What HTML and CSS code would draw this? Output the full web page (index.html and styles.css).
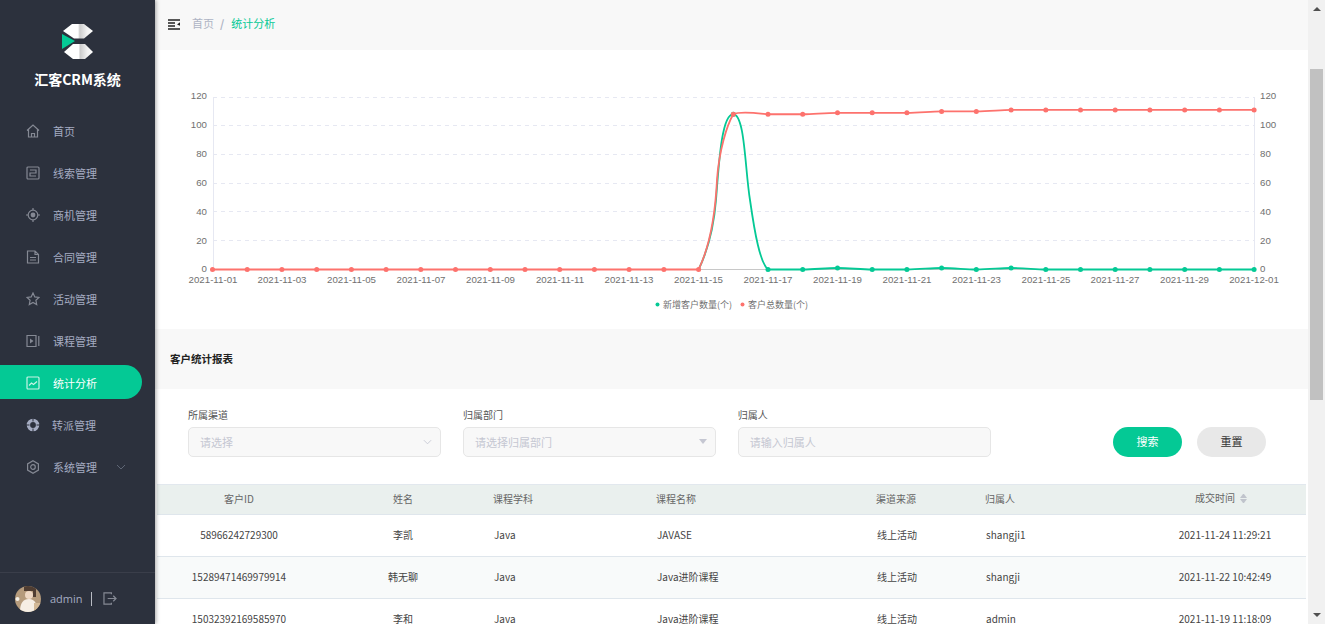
FILE: index.html
```html
<!DOCTYPE html>
<html>
<head>
    <title>统计分析</title>
    <meta charset="UTF-8">
    <link rel="stylesheet" href="styles.css">
</head>
<body>
    <div class="sidebar">
        <div class="logo">
            <svg class="logo-image" viewBox="60 22 36 40">
                <defs>
                    <linearGradient id="logo-shine" x1="0" x2="1" y1="0" y2="0">
                        <stop offset="0.5" stop-color="#ffffff"/>
                        <stop offset="0.56" stop-color="#cccccc"/>
                        <stop offset="0.8" stop-color="#f2f2f2"/>
                        <stop offset="1" stop-color="#ffffff"/>
                    </linearGradient>
                    <filter id="photo-blur"><feGaussianBlur stdDeviation="0.7"/></filter>
                    <clipPath id="avatar-clip"><circle cx="13" cy="13" r="13"/></clipPath>
                </defs>
                <polygon points="63,31 72,24 84,24 93,31 84,38.500 74,38.500" fill="url(#logo-shine)"/>
                <polygon points="64,52 73,44 85,44 93,52 85,59 73,59" fill="url(#logo-shine)"/>
                <polygon points="62,34 75,41 62,49" fill="#04c995"/>
            </svg>
            <div class="logo-name">汇客CRM系统</div>
        </div>
        <div class="menu">
            <div class="menu-element">
                <svg class="menu-icon" viewBox="0 0 14 14"><path d="M1 6.500 7 1l6 5.500M2.500 5.500V13h9V5.500M5.500 13V9.500h3V13"/></svg>
                <span>首页</span>
            </div>
            <div class="menu-element">
                <svg class="menu-icon" viewBox="0 0 14 14"><rect x="1" y="1" width="12" height="12" rx="1"/><path d="M4 4h6v3H4v3h6"/></svg>
                <span>线索管理</span>
            </div>
            <div class="menu-element">
                <svg class="menu-icon" viewBox="0 0 14 14"><circle cx="7" cy="7" r="4.800"/><circle class="icon-fill" cx="7" cy="7" r="2.400"/><path d="M7 0v2M7 12v2M0 7h2M12 7h2"/></svg>
                <span>商机管理</span>
            </div>
            <div class="menu-element">
                <svg class="menu-icon" viewBox="0 0 14 14"><path d="M1.500 1h7.500l3.500 3.500V13h-11zM9 1v3.500h3.500M4 7.500h6M4 10h6"/></svg>
                <span>合同管理</span>
            </div>
            <div class="menu-element">
                <svg class="menu-icon" viewBox="0 0 14 14"><path d="M7 1l1.800 3.900 4.200.5-3.100 2.900.8 4.200L7 10.400l-3.700 2.100.8-4.200L1 5.400l4.200-.5z"/></svg>
                <span>活动管理</span>
            </div>
            <div class="menu-element">
                <svg class="menu-icon" viewBox="0 0 14 14"><path d="M10 1.500H1v11h9zM12.800 2v10"/><path class="icon-fill" d="M4 4.500 7.500 7 4 9.500z"/></svg>
                <span>课程管理</span>
            </div>
            <div class="menu-element active-element">
                <svg class="menu-icon" viewBox="0 0 14 14"><rect x="1" y="1" width="12" height="12" rx="1"/><path d="M3 9.500 5.500 7 7.500 8.500 11 5.500"/></svg>
                <span>统计分析</span>
            </div>
            <div class="menu-element">
                <svg class="menu-icon ring-icon" viewBox="0 0 14 14"><circle cx="7" cy="7" r="4.600"/><path class="ring-cut" d="M7 0v3.500M7 10.500V14M0 7h3.500M10.500 7H14"/></svg>
                <span class="shift-left">转派管理</span>
            </div>
            <div class="menu-element">
                <svg class="menu-icon" viewBox="0 0 14 14"><path d="M7 .8l5.400 3.100v6.200L7 13.200l-5.400-3.100V3.900z"/><circle cx="7" cy="7" r="2.300"/></svg>
                <span>系统管理</span>
                <svg class="menu-arrow" viewBox="0 0 10 6"><path d="M1 1l4 4 4-4"/></svg>
            </div>
        </div>
        <div class="user-box">
            <svg class="avatar" viewBox="0 0 26 26">
                <g clip-path="url(#avatar-clip)">
                    <rect width="26" height="26" fill="#b59b7c"/>
                    <g filter="url(#photo-blur)">
                        <path d="M9 0h12v11H18V5H9z" fill="#4f3d30"/>
                        <circle cx="14" cy="9" r="4" fill="#eed8c4"/>
                        <path d="M5 26c0-9 3-13 9-13s8 5 9 13z" fill="#f6eee4"/>
                        <circle cx="2.500" cy="13" r="2" fill="#f4efe6"/>
                        <path d="M19 17h7v9h-7z" fill="#d2b896"/>
                    </g>
                </g>
            </svg>
            <span class="user-name">admin</span>
            <span class="user-split"></span>
            <svg class="logout-icon" viewBox="0 0 15 14"><path d="M9 2.500V1H1v12h8v-1.500M5 7h9M11 4l3 3-3 3"/></svg>
        </div>
    </div>

    <div class="content">
        <div class="page-head">
            <svg class="fold-icon" viewBox="0 0 12 11"><path d="M0 1h12M0 4h7M0 7h7M0 10h12"/><path class="fold-arrow" d="M12 3.300v3.400L9 5.500z"/></svg>
            <span class="crumb">首页</span>
            <span class="crumb-split">/</span>
            <span class="crumb-active">统计分析</span>
        </div>

        <div class="chart-box">
            <svg class="chart" viewBox="155 50 1153 279">
                <g class="grid">
                    <path d="M213 97.500H1254M213 125.500H1254M213 154.500H1254M213 183.500H1254M213 211.500H1254M213 240.500H1254"/>
                </g>
                <path class="axis-line" d="M213.500 97V269M1254.500 97V269"/>
                <path class="axis-base" d="M213 269.500H1254"/>

                <g class="label label-left">
                    <text x="207" y="99">120</text>
                    <text x="207" y="128">100</text>
                    <text x="207" y="157">80</text>
                    <text x="207" y="186">60</text>
                    <text x="207" y="215">40</text>
                    <text x="207" y="244">20</text>
                    <text x="207" y="272">0</text>
                </g>
                <g class="label">
                    <text x="1260" y="99">120</text>
                    <text x="1260" y="128">100</text>
                    <text x="1260" y="157">80</text>
                    <text x="1260" y="186">60</text>
                    <text x="1260" y="215">40</text>
                    <text x="1260" y="244">20</text>
                    <text x="1260" y="272">0</text>
                </g>
                <g class="label label-mid">
                    <text x="213" y="283">2021-11-01</text>
                    <text x="282" y="283">2021-11-03</text>
                    <text x="351.500" y="283">2021-11-05</text>
                    <text x="421" y="283">2021-11-07</text>
                    <text x="490.500" y="283">2021-11-09</text>
                    <text x="560" y="283">2021-11-11</text>
                    <text x="629" y="283">2021-11-13</text>
                    <text x="698.500" y="283">2021-11-15</text>
                    <text x="768" y="283">2021-11-17</text>
                    <text x="837.500" y="283">2021-11-19</text>
                    <text x="907" y="283">2021-11-21</text>
                    <text x="976.500" y="283">2021-11-23</text>
                    <text x="1046" y="283">2021-11-25</text>
                    <text x="1115" y="283">2021-11-27</text>
                    <text x="1184.500" y="283">2021-11-29</text>
                    <text x="1254" y="283">2021-12-01</text>
                </g>

                <!-- 新增客户数量 -->
                <path class="line-green" d="M698.600 269.500C708 250 714 225 716 200C719 160 722 114 733.300 114.250C745 114.500 745 170 750 200C755 235 760 262 768 269.500L802.700 269.500C815 269.500 825 268 837.500 268C850 268 860 269.500 872.200 269.500L906.900 269.500C920 269.500 930 268 941.600 268C955 268 965 269.500 976.300 269.500C990 269.500 1000 268 1011.100 268C1025 268 1035 269.500 1045.800 269.500L1254.100 269.500"/>
                <g class="dots-green">
                    <circle cx="733.300" cy="114.250" r="2.500"/>
                    <circle cx="768" cy="269.500" r="2.500"/>
                    <circle cx="802.700" cy="269.500" r="2.500"/>
                    <circle cx="837.500" cy="268" r="2.500"/>
                    <circle cx="872.200" cy="269.500" r="2.500"/>
                    <circle cx="906.900" cy="269.500" r="2.500"/>
                    <circle cx="941.600" cy="268" r="2.500"/>
                    <circle cx="976.300" cy="269.500" r="2.500"/>
                    <circle cx="1011.100" cy="268" r="2.500"/>
                    <circle cx="1045.800" cy="269.500" r="2.500"/>
                    <circle cx="1080.500" cy="269.500" r="2.500"/>
                    <circle cx="1115.200" cy="269.500" r="2.500"/>
                    <circle cx="1149.900" cy="269.500" r="2.500"/>
                    <circle cx="1184.700" cy="269.500" r="2.500"/>
                    <circle cx="1219.400" cy="269.500" r="2.500"/>
                    <circle cx="1254.100" cy="269.500" r="2.500"/>
                </g>

                <!-- 客户总数量 -->
                <path class="line-red" d="M212.500 269.500L698.600 269.500C708 250 715 220 717 180C719 150 727 125 733.300 114.250C740 111 755 113 768 114.250L802.700 114.250C815 114 825 112.800 837.500 112.800L906.900 112.800C920 112.800 930 111.400 941.600 111.400L976.300 111.400C990 111.400 1000 109.900 1011.100 109.900L1254.100 109.900"/>
                <g class="dots-red">
                    <circle cx="212.500" cy="269.500" r="2.500"/>
                    <circle cx="247.200" cy="269.500" r="2.500"/>
                    <circle cx="281.900" cy="269.500" r="2.500"/>
                    <circle cx="316.700" cy="269.500" r="2.500"/>
                    <circle cx="351.400" cy="269.500" r="2.500"/>
                    <circle cx="386.100" cy="269.500" r="2.500"/>
                    <circle cx="420.800" cy="269.500" r="2.500"/>
                    <circle cx="455.500" cy="269.500" r="2.500"/>
                    <circle cx="490.300" cy="269.500" r="2.500"/>
                    <circle cx="525" cy="269.500" r="2.500"/>
                    <circle cx="559.700" cy="269.500" r="2.500"/>
                    <circle cx="594.400" cy="269.500" r="2.500"/>
                    <circle cx="629.100" cy="269.500" r="2.500"/>
                    <circle cx="663.900" cy="269.500" r="2.500"/>
                    <circle cx="698.600" cy="269.500" r="2.500"/>
                    <circle cx="733.300" cy="114.250" r="2.500"/>
                    <circle cx="768" cy="114.250" r="2.500"/>
                    <circle cx="802.700" cy="114.250" r="2.500"/>
                    <circle cx="837.500" cy="112.800" r="2.500"/>
                    <circle cx="872.200" cy="112.800" r="2.500"/>
                    <circle cx="906.900" cy="112.800" r="2.500"/>
                    <circle cx="941.600" cy="111.400" r="2.500"/>
                    <circle cx="976.300" cy="111.400" r="2.500"/>
                    <circle cx="1011.100" cy="109.900" r="2.500"/>
                    <circle cx="1045.800" cy="109.900" r="2.500"/>
                    <circle cx="1080.500" cy="109.900" r="2.500"/>
                    <circle cx="1115.200" cy="109.900" r="2.500"/>
                    <circle cx="1149.900" cy="109.900" r="2.500"/>
                    <circle cx="1184.700" cy="109.900" r="2.500"/>
                    <circle cx="1219.400" cy="109.900" r="2.500"/>
                    <circle cx="1254.100" cy="109.900" r="2.500"/>
                </g>

                <circle class="legend-green" cx="657.500" cy="304.500" r="2"/>
                <text class="legend" x="663" y="308">新增客户数量(个)</text>
                <circle class="legend-red" cx="742.500" cy="304.500" r="2"/>
                <text class="legend" x="748" y="308">客户总数量(个)</text>
            </svg>
        </div>

        <div class="report-title">客户统计报表</div>

        <div class="filter-form">
            <div class="form-item first-item">
                <div class="form-label">所属渠道</div>
                <div class="form-input">
                    <span>请选择</span>
                    <svg class="select-arrow" viewBox="0 0 10 6"><path d="M1 1l4 4 4-4"/></svg>
                </div>
            </div>
            <div class="form-item">
                <div class="form-label">归属部门</div>
                <div class="form-input">
                    <span>请选择归属部门</span>
                    <span class="select-caret"></span>
                </div>
            </div>
            <div class="form-item">
                <div class="form-label">归属人</div>
                <div class="form-input"><span>请输入归属人</span></div>
            </div>
            <div class="form-buttons">
                <button type="button" class="search-button">搜索</button>
                <button type="button" class="reset-button">重置</button>
            </div>
        </div>

        <div class="table-box">
            <table>
                <colgroup>
                    <col class="col-id">
                    <col class="col-name">
                    <col class="col-subject">
                    <col class="col-course">
                    <col class="col-channel">
                    <col class="col-owner">
                    <col class="col-time">
                </colgroup>
                <thead>
                    <tr>
                        <th class="center">客户ID</th>
                        <th class="center">姓名</th>
                        <th>课程学科</th>
                        <th>课程名称</th>
                        <th>渠道来源</th>
                        <th>归属人</th>
                        <th class="center sort-head">成交时间<span class="sort-icon"><i class="sort-up"></i><i class="sort-down"></i></span></th>
                    </tr>
                </thead>
                <tbody>
                    <tr>
                        <td class="center">58966242729300</td>
                        <td class="center">李凯</td>
                        <td>Java</td>
                        <td>JAVASE</td>
                        <td>线上活动</td>
                        <td>shangji1</td>
                        <td class="center">2021-11-24 11:29:21</td>
                    </tr>
                    <tr class="stripe">
                        <td class="center">15289471469979914</td>
                        <td class="center">韩无聊</td>
                        <td>Java</td>
                        <td>Java进阶课程</td>
                        <td>线上活动</td>
                        <td>shangji</td>
                        <td class="center">2021-11-22 10:42:49</td>
                    </tr>
                    <tr>
                        <td class="center">15032392169585970</td>
                        <td class="center">李和</td>
                        <td>Java</td>
                        <td>Java进阶课程</td>
                        <td>线上活动</td>
                        <td>admin</td>
                        <td class="center">2021-11-19 11:18:09</td>
                    </tr>
                </tbody>
            </table>
        </div>
    </div>

    <div class="scrollbar">
        <span class="scroll-up"></span>
        <div class="scroll-thumb"></div>
        <span class="scroll-down"></span>
    </div>
</body>
</html>
```

FILE: styles.css
```css
html, body {
    height: 100%;
    margin: 0;
    overflow: hidden;
}

body {
    display: flex;
    background-color: white;
    font-family: "Noto Sans CJK SC", "Noto Sans", sans-serif;
}

/* sidebar */
.sidebar {
    width: 155px;
    flex: none;
    display: flex;
    flex-direction: column;
    background-color: #2c313d;
    box-shadow: 1px 0 4px rgba(0, 0, 0, 0.35);
    position: relative;
    z-index: 1;
}

.logo {
    height: 110px;
    display: flex;
    flex-direction: column;
    align-items: center;
}

.logo-image {
    width: 36px;
    height: 40px;
    margin-top: 22px;
    flex: none;
}

.logo-name {
    margin-top: 6px;
    font-size: 14px;
    line-height: 22px;
    font-weight: bold;
    color: white;
}

.menu {
    flex: 1;
}

.menu-element {
    height: 34px;
    margin-bottom: 8px;
    width: 142px;
    display: flex;
    align-items: center;
    padding-left: 26px;
    padding-top: 1px;
    box-sizing: border-box;
    font-size: 11px;
    color: #a5acc2;
    border-radius: 0 17px 17px 0;
}

.menu-element:first-child {
    margin-top: 3px;
}

.active-element {
    background-color: #04c995;
    color: white;
}

.menu-icon {
    width: 14px;
    height: 14px;
    margin-right: 13px;
    flex: none;
    fill: none;
    stroke: #858994;
    stroke-width: 1.200;
}

.menu-icon .icon-fill {
    fill: #858994;
    stroke: none;
}

.active-element .menu-icon {
    stroke: #c9f3e6;
}

.ring-icon circle {
    stroke-width: 3.400;
    stroke: #a5acc2;
}

.ring-icon .ring-cut {
    stroke: #2c313d;
    stroke-width: 1;
}

.shift-left {
    margin-left: -1px;
}

.menu-arrow {
    width: 10px;
    height: 6px;
    margin-left: 19px;
    fill: none;
    stroke: #5e6675;
    stroke-width: 1;
}

.user-box {
    height: 52px;
    border-top: 1px solid #3a3e4a;
    display: flex;
    align-items: center;
    padding-left: 15px;
    box-sizing: border-box;
}

.avatar {
    width: 26px;
    height: 26px;
    flex: none;
}

.user-name {
    margin-left: 9px;
    font-family: "Open Sans", sans-serif;
    font-size: 11px;
    color: #a5acc2;
}

.user-split {
    width: 1px;
    height: 14px;
    margin-left: 8px;
    background-color: #b9bcc4;
}

.logout-icon {
    width: 14px;
    height: 13px;
    margin-left: 11px;
    fill: none;
    stroke: #858994;
    stroke-width: 1.300;
}

/* main column */
.content {
    flex: 1;
    min-width: 0;
    overflow: hidden;
}

.page-head {
    height: 50px;
    display: flex;
    align-items: center;
    box-sizing: border-box;
    padding-left: 13px;
    padding-bottom: 4px;
    background-color: #f8f8f8;
    font-size: 11px;
}

.fold-icon {
    width: 12px;
    height: 11px;
    margin-top: 3px;
    margin-right: 12px;
    fill: none;
    stroke: #222;
    stroke-width: 1.500;
}

.fold-icon .fold-arrow {
    fill: #222;
    stroke: none;
}

.crumb {
    color: #aeb4c4;
}

.crumb-split {
    margin: 0 7px 0 6px;
    color: #aeb4c4;
    font-weight: bold;
}

.crumb-active {
    color: #04c995;
}

.chart-box {
    height: 279px;
}

.chart {
    display: block;
    width: 100%;
    height: 100%;
}

.grid path {
    fill: none;
    stroke: #e6e8f2;
    stroke-dasharray: 4 4;
}

.axis-line {
    fill: none;
    stroke: #e6e8f2;
}

.axis-base {
    fill: none;
    stroke: #c8c8c8;
}

.label text {
    font-family: "Liberation Sans", sans-serif;
    font-size: 9.700px;
    fill: #707070;
}

.label-left text {
    text-anchor: end;
}

.label-mid text {
    text-anchor: middle;
}

.line-green {
    fill: none;
    stroke: #04c995;
    stroke-width: 1.800;
}

.line-red {
    fill: none;
    stroke: #fd726d;
    stroke-width: 1.800;
}

.dots-green circle, .legend-green {
    fill: #04c995;
}

.dots-red circle, .legend-red {
    fill: #fd726d;
}

.legend {
    font-size: 9px;
    fill: #707070;
}

.report-title {
    height: 60px;
    line-height: 60px;
    padding-left: 15px;
    background-color: #f8f8f8;
    font-size: 10.500px;
    font-weight: bold;
    color: #222;
}

/* filter */
.filter-form {
    height: 95px;
    display: flex;
    align-items: flex-start;
    box-sizing: border-box;
    padding-top: 18px;
}

.form-item {
    width: 253.400px;
    margin-left: 21.500px;
}

.first-item {
    margin-left: 33px;
}

.form-label {
    height: 20px;
    line-height: 14px;
    padding-top: 1px;
    box-sizing: border-box;
    font-size: 10px;
    color: #555;
}

.form-input {
    height: 30px;
    box-sizing: border-box;
    display: flex;
    align-items: center;
    justify-content: space-between;
    padding: 0 8px 1px 11px;
    background-color: #f8f8f8;
    border: 1px solid #e6e6e6;
    border-radius: 5px;
    font-size: 11px;
    color: #c5c7d2;
}

.select-arrow {
    width: 9px;
    height: 6px;
    fill: none;
    stroke: #c5c7d2;
    stroke-width: 1;
}

.select-caret {
    border-left: 4px solid transparent;
    border-right: 4px solid transparent;
    border-top: 5px solid #c5c7d2;
}

.form-buttons {
    display: flex;
    gap: 15px;
    margin-left: 121.800px;
    margin-top: 20px;
}

.form-buttons button {
    width: 69px;
    height: 30px;
    padding: 0 0 2px;
    border: none;
    border-radius: 15px;
    font-family: inherit;
    font-size: 11px;
}

.search-button {
    background-color: #04c995;
    color: white;
}

.reset-button {
    background-color: #e8e8e8;
    color: #333;
}

/* table */
.table-box {
    padding: 0 2px;
}

table {
    width: 100%;
    table-layout: fixed;
    border-collapse: collapse;
    font-size: 10px;
    color: #444;
}

.col-id, .col-name {
    width: 164px;
}

.col-subject {
    width: 163px;
}

.col-course {
    width: 220px;
}

.col-channel {
    width: 109px;
}

.col-owner {
    width: 167px;
}

th {
    height: 30px;
    box-sizing: border-box;
    padding: 0 0 2px 8px;
    background-color: #eaf0ee;
    border-top: 1px solid #e2e8ee;
    border-bottom: 1px solid #dfe6ec;
    font-weight: normal;
    text-align: left;
    color: #666;
}

td {
    height: 42px;
    padding: 0 0 2px 9px;
    box-sizing: border-box;
    border-bottom: 1px solid #dfe6ec;
}

th.center, td.center {
    padding-left: 0;
    text-align: center;
}

th.sort-head {
    padding-right: 8px;
    padding-bottom: 4px;
}

.stripe td {
    background-color: #f8fafa;
}

.sort-icon {
    display: inline-block;
    width: 7px;
    height: 9px;
    margin-left: 5px;
    vertical-align: -1px;
}

.sort-icon i {
    display: block;
    border-left: 3.500px solid transparent;
    border-right: 3.500px solid transparent;
}

.sort-up {
    border-bottom: 4px solid #c0c4cc;
    margin-bottom: 1px;
}

.sort-down {
    border-top: 4px solid #c0c4cc;
}

/* scrollbar */
.scrollbar {
    width: 17px;
    flex: none;
    display: flex;
    flex-direction: column;
    align-items: center;
    background-color: #f1f1f1;
}

.scroll-up {
    margin-top: 7px;
    border-left: 4px solid transparent;
    border-right: 4px solid transparent;
    border-bottom: 4px solid #505050;
}

.scroll-thumb {
    width: 13px;
    height: 331px;
    margin-top: 58px;
    background-color: #c1c1c1;
}

.scroll-down {
    margin-top: auto;
    margin-bottom: 7px;
    border-left: 4px solid transparent;
    border-right: 4px solid transparent;
    border-top: 4px solid #505050;
}
```
